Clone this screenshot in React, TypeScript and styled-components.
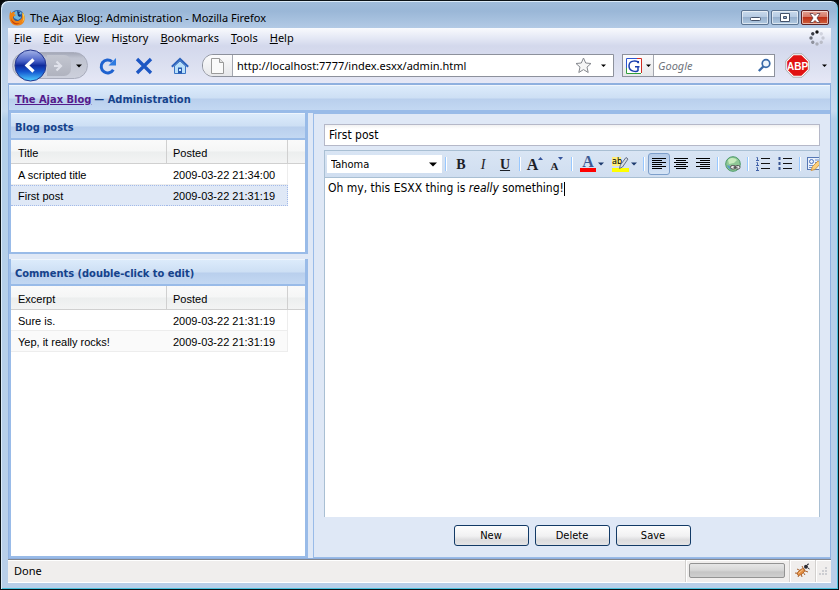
import React from "react";
import styled, { createGlobalStyle, css } from "styled-components";

const ui = '"Noto Sans", "Open Sans", sans-serif';
const tahoma = '"DejaVu Sans Condensed", "DejaVu Sans", sans-serif';
const arial = '"Liberation Sans", Arial, sans-serif';

const Global = createGlobalStyle`
  *, *::before, *::after { box-sizing: border-box; }
  body { margin: 0; background: #05090c; font-family: ${ui}; font-size: 11px; color: #000; }
  button, input, select { font: inherit; color: inherit; margin: 0; padding: 0; border: 0; background: none; outline: none; }
  svg { display: block; flex: none; overflow: visible; }
`;

const Window = styled.div`
  display: flex;
  flex-direction: column;
  min-height: 100vh;
  padding: 0 7px 6px;
  border: 1px solid #0b1216;
  border-radius: 8px 8px 0 0;
  background: linear-gradient(#a1bddb 0, #9ab7d7 10px, #b4cbe6 28px, #c6daef 110px, #b3cfe9 118px, #b9cfe9 100%);
  box-shadow: inset 1px 1px 0 #dcebf8, inset -1px -1px 0 #49c0dc;
`;

const TitleBar = styled.header`
  display: flex;
  align-items: center;
  height: 27px;
  padding: 6px 2px 0 1px;
  gap: 4px;
`;

const WindowTitle = styled.h1`
  flex: 1;
  margin: 0;
  font-size: 11px;
  line-height: 18px;
  font-weight: 400;
  white-space: nowrap;
`;

const WindowButtons = styled.div`
  display: flex;
  gap: 2px;
`;

const WindowButton = styled.button<{ $close?: boolean }>`
  display: flex;
  align-items: center;
  justify-content: center;
  width: 28px;
  height: 15px;
  border: 1px solid ${(p) => (p.$close ? "#5c1f22" : "#5b7391")};
  border-radius: 2px;
  box-shadow: inset 0 0 0 1px rgba(255, 255, 255, 0.55);
  background: ${(p) =>
    p.$close
      ? "linear-gradient(#e3a294 0, #d57563 48%, #bd3119 50%, #d0603c 100%)"
      : "linear-gradient(#c9daec 0, #b5cae2 48%, #97b1ce 50%, #b2cae2 100%)"};
`;

const Client = styled.div`
  display: flex;
  flex-direction: column;
  flex: 1;
`;

const Chrome = styled.div`
  background: linear-gradient(#f9fafd 0, #e4e8f5 10px, #d3d8ec 18px, #dde1f1 40px, #e6e8f6 100%);
`;

const MenuBar = styled.nav`
  display: flex;
  align-items: center;
  height: 20px;
  padding: 0 6px;
  gap: 12px;
`;

const MenuItem = styled.button`
  line-height: 18px;
  white-space: nowrap;
`;

const Spacer = styled.span`
  flex: 1;
`;

const NavBar = styled.div`
  display: flex;
  align-items: center;
  height: 35px;
  padding: 0 2px 0 4px;
`;

const HistoryPill = styled.div`
  display: flex;
  align-items: center;
  width: 76px;
  height: 27px;
  margin-right: 2px;
  padding-left: 1px;
  border: 1px solid #a9adbd;
  border-radius: 14px;
  background: linear-gradient(#a5a9b8 0, #bfc3d0 5px, #cdd0dc 100%);
`;

const BackButton = styled.button`
  flex: none;
  width: 33px;
  height: 33px;
`;

const PillButton = styled.button<{ $raised?: boolean }>`
  display: flex;
  align-items: center;
  justify-content: center;
  flex: 1;
  height: 21px;
  border-radius: 0 7px 7px 0;
  ${(p) =>
    p.$raised &&
    css`
      flex: 0 0 24px;
      background: linear-gradient(#c3c6d0, #b0b3bf);
    `}
`;

const NavButton = styled.button`
  display: flex;
  align-items: center;
  justify-content: center;
  width: 36px;
  height: 28px;
`;

const NavGap = styled.span<{ $width?: number }>`
  flex: none;
  width: ${(p) => p.$width ?? 8}px;
`;

const Field = styled.div<{ $round?: boolean; $basis: string }>`
  display: flex;
  align-items: center;
  flex: ${(p) => p.$basis};
  min-width: 0;
  height: 23px;
  border: 1px solid #8d919c;
  border-radius: ${(p) => (p.$round ? "11px 0 0 11px" : "0")};
  background: #fff;
  overflow: hidden;
`;

const FieldBadge = styled.button<{ $width: number }>`
  display: flex;
  align-items: center;
  justify-content: center;
  gap: 4px;
  flex: none;
  width: ${(p) => p.$width}px;
  height: 21px;
  border-right: 1px solid #a4a7b0;
  background: linear-gradient(#fbfbfc, #e6e7ea);
`;

const FieldInput = styled.input`
  flex: 1;
  min-width: 0;
  height: 21px;
  padding: 0 4px;
  &::placeholder { color: #70757d; font-style: italic; opacity: 1; }
`;

const IconButton = styled.button<{ $width?: number }>`
  display: flex;
  align-items: center;
  justify-content: center;
  width: ${(p) => p.$width ?? 20}px;
  height: 20px;
`;

const Page = styled.main`
  display: flex;
  flex-direction: column;
  flex: 1;
  border: 1px solid #8fb0df;
  border-top-width: 2px;
  background: #dfe8f6;
  font-family: ${tahoma};
  font-size: 11px;
`;

const barFill = css`
  background: linear-gradient(#dcebfb 0, #cddff4 12px, #b9cfed 13px, #c3d8f2 100%);
  color: #15428b;
  font-size: 11px;
  font-weight: 700;
`;

const SiteBar = styled.div`
  ${barFill}
  display: flex;
  align-items: center;
  gap: 3px;
  height: 28px;
  padding: 2px 6px 0;
  border-bottom: 3px solid #99bbe8;
  border-top: 1px solid #f0f6fd;
  white-space: nowrap;
`;

const SiteLink = styled.a`
  color: #551a8b;
`;

const Columns = styled.div`
  display: flex;
  flex: 1;
  gap: 5px;
  background: #dfe8f6;
`;

const Side = styled.aside`
  display: flex;
  flex-direction: column;
  flex: 0 1 299px;
  gap: 5px;
`;

const Panel = styled.section<{ $fill?: boolean }>`
  display: flex;
  flex-direction: column;
  flex: ${(p) => (p.$fill ? "1" : "0 0 141px")};
  border: solid #99bbe8;
  border-width: 0 3px 2px 2px;
`;

const PanelTitle = styled.h2`
  ${barFill}
  height: 27px;
  margin: 0;
  padding: 2px 4px 0;
  border-top: 1px solid #eef5fd;
  border-bottom: 2px solid #99bbe8;
  line-height: 24px;
`;

const PanelBody = styled.div`
  flex: 1;
  background: #fff;
`;

const Table = styled.table`
  width: 100%;
  table-layout: fixed;
  border-collapse: separate;
  border-spacing: 0;
  font-family: ${arial};
  font-size: 11px;
`;

const Col = styled.col<{ $width?: number }>`
  width: ${(p) => (p.$width ? `${p.$width}px` : "auto")};
`;

const Th = styled.th`
  height: 24px;
  padding: 2px 6px 0;
  border-right: 1px solid #d0d0d0;
  border-bottom: 1px solid #d0d0d0;
  background: linear-gradient(#fafafa 0, #f5f6f6 11px, #eceeee 12px, #f3f4f4 100%);
  text-align: left;
  font-weight: 400;
  &:first-child { padding-left: 7px; }
  &:last-child { border-right: 0; }
`;

const Row = styled.tr<{ $state?: "selected" | "alt" }>`
  td {
    height: 21px;
    padding: 1px 6px 0;
    border: solid #ededed;
    border-width: 0 0 1px;
    white-space: nowrap;
  }
  td:first-child { padding-left: 7px; }
  td:nth-child(2) { border-right-width: 1px; }
  td:nth-child(3) { border: 0; }
  ${(p) =>
    p.$state === "alt" &&
    css`
      td:nth-child(-n + 2) { background: #fafafa; }
    `}
  ${(p) =>
    p.$state === "selected" &&
    css`
      td:nth-child(-n + 2) {
        padding-top: 0;
        background: #dfe8f6;
        border-top: 1px dotted #a3bae9;
        border-bottom: 1px dotted #a3bae9;
      }
      td:nth-child(2) { border-right: 1px dotted #a3bae9; }
    `}
`;

const Editor = styled.section`
  display: flex;
  flex-direction: column;
  flex: 1;
  min-width: 0;
  padding: 10px 10px 11px;
  border: solid #99bbe8;
  border-width: 1px 0 1px 1px;
`;

const TitleInput = styled.input`
  height: 22px;
  margin-bottom: 4px;
  padding: 0 4px;
  border: 1px solid #b5b8c8;
  background: linear-gradient(#f1f1f1 0, #fff 4px);
  font-size: 12px;
`;

const RichText = styled.div`
  display: flex;
  flex-direction: column;
  flex: 1;
  min-height: 240px;
  border: 1px solid #a9bfd3;
  border-bottom: 0;
  background: #fff;
`;

const Toolbar = styled.div`
  display: flex;
  align-items: center;
  height: 27px;
  padding: 0 2px;
  overflow: hidden;
  border-bottom: 1px solid #a9bfd3;
  background: linear-gradient(#d9e5f4, #d0def0);
`;

const SelectBox = styled.label`
  display: flex;
  align-items: center;
  flex: none;
  width: 115px;
  height: 18px;
  padding-right: 5px;
  background: #fff;
`;

const FontSelect = styled.select`
  flex: 1;
  height: 18px;
  padding: 0 4px;
  appearance: none;
`;

const Separator = styled.span`
  flex: none;
  width: 2px;
  height: 14px;
  margin: 0 3px;
  border-left: 1px solid #98c8ff;
  border-right: 1px solid #fff;
`;

const Tool = styled.button<{ $active?: boolean; $menu?: boolean }>`
  display: flex;
  align-items: center;
  justify-content: center;
  flex: none;
  gap: ${(p) => (p.$menu ? 2 : 0)}px;
  width: ${(p) => (p.$menu ? 32 : 22)}px;
  height: 22px;
  border-radius: 3px;
  border: 1px solid transparent;
  ${(p) =>
    p.$active &&
    css`
      border-color: #7d9fcb;
      background: linear-gradient(#b5cbe8, #d5e4f6);
    `}
`;

const Glyph = styled.span<{ $size: number; $low?: boolean; $light?: boolean }>`
  padding-top: ${(p) => (p.$low ? 4 : 1)}px;
  color: #1c2027;
  font-family: "Liberation Serif", serif;
  font-size: ${(p) => p.$size}px;
  line-height: 14px;
  font-weight: ${(p) => (p.$light ? 400 : 700)};
`;

const Content = styled.div`
  flex: 1;
  padding: 2px 3px;
  font-size: 12px;
  line-height: 16px;
  outline: none;
`;

const Caret = styled.span`
  display: inline-block;
  width: 1px;
  height: 14px;
  background: #000;
  vertical-align: middle;
`;

const Actions = styled.div`
  display: flex;
  justify-content: center;
  gap: 6px;
  padding-top: 8px;
`;

const ActionButton = styled.button`
  width: 75px;
  height: 21px;
  border: 1px solid #123a66;
  border-radius: 3px;
  background: linear-gradient(#fdfdfd 0, #f1f1f2 10px, #dcdcde 14px, #e3e3e5 100%);
`;

const StatusBar = styled.footer`
  display: flex;
  align-items: stretch;
  height: 24px;
  border-top: 1px solid #83878f;
  border-bottom: 1px solid #fff;
  background: #f0eeed;
  box-shadow: inset 0 1px 0 #fff;
`;

const StatusText = styled.span`
  flex: 1;
  padding: 0 6px;
  line-height: 22px;
`;

const StatusCell = styled.div<{ $width: number }>`
  display: flex;
  align-items: center;
  justify-content: center;
  width: ${(p) => p.$width}px;
  padding: 0 1px 1px 0;
  border-left: 1px solid #d2d0ce;
  box-shadow: inset 1px 0 0 #fff;
`;

const Progress = styled.div`
  width: 96px;
  height: 15px;
  border: 1px solid #939393;
  border-radius: 2px;
  background: linear-gradient(#e6e6e6 0, #d8d8d8 6px, #c5c5c5 8px, #cfcfcf 100%);
`;

const Down = ({ color = "#000", size = 6 }: { color?: string; size?: number }) => (
  <svg width={size} height={size / 2 + 1} viewBox="0 0 8 4" aria-hidden="true">
    <path d="M0 0h8L4 4z" fill={color} />
  </svg>
);

const FirefoxLogo = () => (
  <svg width="17" height="17" viewBox="0 0 17 17" aria-hidden="true">
    <circle cx="8.5" cy="8" r="7" fill="#2a5ca4" />
    <path d="M5 3c3-2 6-1 8 1l-2 2 1 3-3 2-4-2z" fill="#6fb5dd" />
    <path d="M8 2l3 1-1 2 2 1-1 2-2-1z" fill="#1b3771" />
    <path d="M1.500 1.500c0 2 .5 2 1 2.500C4 2.500 5 3 6 3L5 5l2 1-3 2c0 3 3 5 6 3.500 2-1 3-2 3-4l.5-4c4 5 2.500 13-5 13C.5 16.500-1 9 1.500 1.500z" fill="#ee8214" />
    <path d="M13.500 3c3 4 2.500 8-.5 10.500C15 10 14.500 7 13.500 6z" fill="#fbd04a" />
    <path d="M2 9c1 4 5 6 9 5-3 3-9 1-9-5z" fill="#c8420c" />
  </svg>
);

const Minimize = () => (
  <svg width="11" height="9" viewBox="0 0 11 9" aria-hidden="true">
    <rect x="0.500" y="4.500" width="10" height="3" rx="1" fill="#fff" stroke="#44526a" />
  </svg>
);
const Maximize = () => (
  <svg width="10" height="9" viewBox="0 0 10 9" aria-hidden="true">
    <path d="M.5.5h9v8h-9z M3.500 3.500h3v2h-3z" fill="#fff" fillRule="evenodd" stroke="#44526a" />
  </svg>
);
const Close = () => (
  <svg width="12" height="10" viewBox="0 0 12 10" aria-hidden="true">
    <path d="M1 .5h3l2 2 2-2h3L8 5l3 4.500H8l-2-2-2 2H1L4 5z" fill="#fff" stroke="#5a3a44" strokeWidth=".8" />
  </svg>
);

const dotColors = ["#111", "#d0d3de", "#c6c9d4", "#babdc8", "#a9acb7", "#8e919c", "#666a75", "#3a3d46"];
const Throbber = () => (
  <svg width="16" height="16" viewBox="0 0 16 16" aria-hidden="true">
    {dotColors.map((c, i) => (
      <circle key={c} cx="8" cy="2" r="1.700" fill={c} transform={`rotate(${i * 45} 8 8)`} />
    ))}
  </svg>
);

const BackIcon = () => (
  <svg width="33" height="33" viewBox="0 0 33 33" aria-hidden="true">
    <defs>
      <linearGradient id="back" x1="0" y1="0" x2="0" y2="1">
        <stop offset="0" stopColor="#a7b5e8" />
        <stop offset=".35" stopColor="#4a63c8" />
        <stop offset=".5" stopColor="#0f2b9c" />
        <stop offset=".7" stopColor="#1557d0" />
        <stop offset="1" stopColor="#4fd0ff" />
      </linearGradient>
    </defs>
    <circle cx="16.500" cy="16.500" r="15.500" fill="url(#back)" stroke="#23358c" />
    <path d="M19.500 10.500l-6.500 6 6.500 6" fill="none" stroke="#fff" strokeWidth="3.200" />
  </svg>
);
const ForwardIcon = () => (
  <svg width="10" height="12" viewBox="0 0 10 12" aria-hidden="true">
    <path d="M2.500 1.500L7 6l-4.500 4.500M0 6h6" fill="none" stroke="#dfe1ea" strokeWidth="2.200" />
  </svg>
);
const ReloadIcon = () => (
  <svg width="18" height="18" viewBox="0 0 18 18" aria-hidden="true">
    <path d="M14.300 12.800A6.500 6.500 0 1 1 13 4.600" fill="none" stroke="#1e62cf" strokeWidth="3" />
    <path d="M17 1v7.500H9.500z" fill="#2f7be0" />
  </svg>
);
const StopIcon = () => (
  <svg width="18" height="18" viewBox="0 0 18 18" aria-hidden="true">
    <path d="M2 2l14 14M16 2L2 16" stroke="#1d57c4" strokeWidth="3.300" />
  </svg>
);
const HomeIcon = () => (
  <svg width="18" height="18" viewBox="0 0 18 18" aria-hidden="true">
    <path d="M3.500 9L9 4l5.500 5v7.500h-11z" fill="#b9e0fa" stroke="#3b74c4" />
    <path d="M.8 9.800L9 2l8.200 7.800" fill="none" stroke="#2b62bb" strokeWidth="2" />
    <path d="M7 10.500h4v6H7z" fill="#2459b0" />
    <path d="M8 12h2v2H8z" fill="#cfe8fb" />
  </svg>
);
const PageIcon = () => (
  <svg width="13" height="16" viewBox="0 0 13 16" aria-hidden="true">
    <path d="M.5.5h8l4 4v11H.5z" fill="#fafafa" stroke="#9a9a9a" />
    <path d="M8.500.5v4h4" fill="#e2e2e2" stroke="#9a9a9a" />
  </svg>
);
const StarIcon = () => (
  <svg width="17" height="17" viewBox="0 0 17 17" aria-hidden="true">
    <path d="M8.500 1l2.200 5 5.300.5-4 3.600 1.200 5.400-4.700-2.900-4.700 2.900L5 10.100 1 6.500 6.300 6z" fill="#f6f6f6" stroke="#85888e" />
  </svg>
);
const GoogleIcon = () => (
  <svg width="16" height="16" viewBox="0 0 16 16" aria-hidden="true">
    <path d="M0 0h16v16H0z" fill="#fff" />
    <path d="M.5 12V.5H11" fill="none" stroke="#2b55d0" />
    <path d="M11 .5h4.500V15" fill="none" stroke="#cf2c22" />
    <path d="M15 15.500H.5V10" fill="none" stroke="#2f9e3a" />
    <path d="M12.300 5.200V3M12.300 5C11.300 2.200 3 1.800 3 8s8 6 9 4.500V8.700M9 8.700h4.500" fill="none" stroke="#1b3fae" strokeWidth="1.500" />
  </svg>
);
const SearchIcon = () => (
  <svg width="15" height="15" viewBox="0 0 15 15" aria-hidden="true">
    <circle cx="9" cy="5.500" r="3.800" fill="#eef5fb" stroke="#3a6aa8" strokeWidth="1.700" />
    <path d="M6.300 8.500L1.800 13" stroke="#3a6aa8" strokeWidth="2.400" />
  </svg>
);
const AdblockIcon = () => (
  <svg width="25" height="25" viewBox="0 0 25 25" aria-hidden="true">
    <path d="M8 .8h9L24.200 8v9L17 24.200H8L.8 17V8z" fill="#fff" stroke="#9b9b9b" strokeWidth=".8" />
    <path d="M8.600 2.200h7.800l6.400 6.400v7.800l-6.400 6.400H8.600l-6.400-6.400V8.600z" fill="#e01212" />
    <text x="12.500" y="16.500" textAnchor="middle" fontFamily="Liberation Sans Narrow, Liberation Sans, sans-serif" fontSize="10" fontWeight="700" fill="#fff">ABP</text>
  </svg>
);

const Grow = () => (
  <svg width="5" height="14" viewBox="0 0 5 14" aria-hidden="true">
    <path d="M0 3l2.500-3L5 3z" fill="#33539b" />
  </svg>
);
const Shrink = () => (
  <svg width="5" height="14" viewBox="0 0 5 14" aria-hidden="true">
    <path d="M0 0h5L2.500 3z" fill="#33539b" />
  </svg>
);
const TextColorIcon = () => (
  <svg width="16" height="16" viewBox="0 0 16 16" aria-hidden="true">
    <text x="8" y="11" textAnchor="middle" fontFamily="Liberation Serif, serif" fontSize="16" fontWeight="700" fill="#3d5a94">A</text>
    <path d="M0 12h16v4H0z" fill="#f00" />
  </svg>
);
const HighlightIcon = () => (
  <svg width="17" height="16" viewBox="0 0 17 16" aria-hidden="true">
    <path d="M0 12h17v4H0z" fill="#ff0" />
    <path d="M0 1h9v9H0z" fill="#ffee7a" />
    <text x="0" y="8" fontFamily="DejaVu Sans Condensed, sans-serif" fontSize="9" fill="#000">ab</text>
    <path d="M14 1.500l2 1.500-5.500 8-3 1.500.8-3.500z" fill="#d5dbe6" stroke="#56637c" strokeWidth=".9" />
  </svg>
);
const alignOffsets = { left: 0, center: 2, right: 4 };
const AlignIcon = ({ kind }: { kind: "left" | "center" | "right" }) => (
  <svg width="14" height="12" viewBox="0 0 14 12" aria-hidden="true">
    {[0, 2, 4, 6, 8, 10].map((y, i) => (
      <rect key={y} x={i % 2 ? alignOffsets[kind] : 0} y={y} width={i % 2 ? 10 : 14} height="1" fill="#000" />
    ))}
  </svg>
);
const LinkIcon = () => (
  <svg width="16" height="16" viewBox="0 0 16 16" aria-hidden="true">
    <circle cx="8" cy="8" r="7.300" fill="#8fc795" stroke="#4b9a68" />
    <path d="M3 4c3-3 7-2 9 0L9 7 4 8z" fill="#c6ebbd" />
    <path d="M2 9l3 1 1 4c-2-1-4-3-4-5z" fill="#5a9fc4" />
    <rect x="5.500" y="9.500" width="5" height="3.500" rx="1.700" fill="#e8e8e8" stroke="#555" />
    <rect x="10" y="9.500" width="5" height="3.500" rx="1.700" fill="#e8e8e8" stroke="#555" />
    <path d="M8.500 11.200h4" stroke="#333" />
  </svg>
);
const ListIcon = ({ ordered }: { ordered?: boolean }) => (
  <svg width="14" height="14" viewBox="0 0 14 14" aria-hidden="true">
    {[2, 7, 12].map((y) => (
      <g key={y}>
        <path d={`M5 ${y - 0.5}h9`} stroke="#111" />
        {ordered ? (
          <path d={`M0.500 ${y - 1.500}h1v3M0 ${y + 1.500}h3`} fill="none" stroke="#4262a8" />
        ) : (
          <rect x="0.500" y={y - 2} width="2" height="3" fill="#35528f" />
        )}
      </g>
    ))}
  </svg>
);
const SourceIcon = () => (
  <svg width="16" height="16" viewBox="0 0 16 16" aria-hidden="true">
    <rect x="0.500" y="1.500" width="14" height="12" fill="#eaf1fb" stroke="#5577b5" />
    <circle cx="4.500" cy="5.500" r="2" fill="none" stroke="#4a72bd" />
    <path d="M8 4h4M8 6.500h3M2 9.500h4M2 11.500h3" stroke="#7393cb" />
    <path d="M11 5l3 2-6 6.500-4 1 1.500-4z" fill="#fbd07c" stroke="#c98a35" strokeWidth=".8" />
  </svg>
);
const BugIcon = () => (
  <svg width="16" height="16" viewBox="0 0 16 16" aria-hidden="true">
    <path d="M3 6l4 2M8 14l-1-4M1 10l4 .5M4 14l1.500-3M8 3l1.500 3M14 9l-4-1.500M11 12l-2-3" stroke="#a8602c" />
    <ellipse cx="7" cy="9" rx="4.500" ry="2.200" transform="rotate(-38 7 9)" fill="#e08a3c" stroke="#a8602c" strokeWidth=".7" />
    <path d="M4.500 10.500L9 6.500" stroke="#fac894" />
    <circle cx="12" cy="3.800" r="2" fill="#2b2b33" />
    <path d="M13 1.500l2-.5M14 5l1.500 1" stroke="#2b2b33" />
  </svg>
);
const Grip = () => (
  <svg width="10" height="10" viewBox="0 0 10 10" aria-hidden="true">
    <path d="M7 1h2v2H7zM7 4h2v2H7zM7 7h2v2H7zM4 4h2v2H4zM4 7h2v2H4zM1 7h2v2H1z" fill="#cccdd1" />
  </svg>
);

const menus: [string, string, string][] = [
  ["", "F", "ile"],
  ["", "E", "dit"],
  ["", "V", "iew"],
  ["Hi", "s", "tory"],
  ["", "B", "ookmarks"],
  ["", "T", "ools"],
  ["", "H", "elp"],
];

type GridRow = { text: string; posted: string; state?: "selected" | "alt" };

const posts: GridRow[] = [
  { text: "A scripted title", posted: "2009-03-22 21:34:00" },
  { text: "First post", posted: "2009-03-22 21:31:19", state: "selected" },
];
const comments: GridRow[] = [
  { text: "Sure is.", posted: "2009-03-22 21:31:19" },
  { text: "Yep, it really rocks!", posted: "2009-03-22 21:31:19", state: "alt" },
];

const DataGrid = ({ heading, rows }: { heading: string; rows: GridRow[] }) => (
  <Table>
    <colgroup>
      <Col $width={156} />
      <Col $width={121} />
      <Col />
    </colgroup>
    <thead>
      <tr>
        <Th scope="col">{heading}</Th>
        <Th scope="col">Posted</Th>
        <Th aria-hidden="true" />
      </tr>
    </thead>
    <tbody>
      {rows.map((r) => (
        <Row key={r.text} $state={r.state}>
          <td>{r.text}</td>
          <td>{r.posted}</td>
          <td />
        </Row>
      ))}
    </tbody>
  </Table>
);

export default function App() {
  return (
    <>
      <Global />
      <Window>
        <TitleBar>
          <FirefoxLogo />
          <WindowTitle>The Ajax Blog: Administration - Mozilla Firefox</WindowTitle>
          <WindowButtons>
            <WindowButton aria-label="Minimize"><Minimize /></WindowButton>
            <WindowButton aria-label="Maximize"><Maximize /></WindowButton>
            <WindowButton aria-label="Close" $close><Close /></WindowButton>
          </WindowButtons>
        </TitleBar>
        <Client>
          <Chrome>
            <MenuBar>
              {menus.map(([before, key, after]) => (
                <MenuItem key={key + after}>{before}<u>{key}</u>{after}</MenuItem>
              ))}
              <Spacer />
              <Throbber />
            </MenuBar>
            <NavBar>
              <HistoryPill>
                <BackButton aria-label="Back"><BackIcon /></BackButton>
                <PillButton aria-label="Forward" $raised><ForwardIcon /></PillButton>
                <PillButton aria-label="Recent pages"><Down /></PillButton>
              </HistoryPill>
              <NavButton aria-label="Reload"><ReloadIcon /></NavButton>
              <NavButton aria-label="Stop"><StopIcon /></NavButton>
              <NavButton aria-label="Home"><HomeIcon /></NavButton>
              <NavGap $width={4} />
              <Field $round $basis="1 1 400px">
                <FieldBadge $width={30} aria-label="Site information"><PageIcon /></FieldBadge>
                <FieldInput aria-label="Address" defaultValue="http://localhost:7777/index.esxx/admin.html" />
                <IconButton aria-label="Bookmark this page"><StarIcon /></IconButton>
                <IconButton aria-label="Show history"><Down size={5} /></IconButton>
              </Field>
              <NavGap />
              <Field $basis="0 1 153px">
                <FieldBadge $width={31} aria-label="Search engine"><GoogleIcon /><Down size={5} /></FieldBadge>
                <FieldInput aria-label="Search" placeholder="Google" />
                <IconButton aria-label="Search"><SearchIcon /></IconButton>
              </Field>
              <NavGap />
              <IconButton $width={28} aria-label="Adblock Plus"><AdblockIcon /></IconButton>
              <NavGap />
              <IconButton $width={10} aria-label="Adblock menu"><Down size={5} /></IconButton>
            </NavBar>
          </Chrome>
          <Page>
            <SiteBar>
              <SiteLink href="#">The Ajax Blog</SiteLink>
              <span>— Administration</span>
            </SiteBar>
            <Columns>
              <Side>
                <Panel>
                  <PanelTitle>Blog posts</PanelTitle>
                  <PanelBody><DataGrid heading="Title" rows={posts} /></PanelBody>
                </Panel>
                <Panel $fill>
                  <PanelTitle>Comments (double-click to edit)</PanelTitle>
                  <PanelBody><DataGrid heading="Excerpt" rows={comments} /></PanelBody>
                </Panel>
              </Side>
              <Editor>
                <TitleInput aria-label="Post title" defaultValue="First post" />
                <RichText>
                  <Toolbar>
                    <SelectBox>
                      <FontSelect aria-label="Font" defaultValue="Tahoma"><option>Tahoma</option></FontSelect>
                      <Down size={8} />
                    </SelectBox>
                    <Separator />
                    <Tool aria-label="Bold"><Glyph $size={14}>B</Glyph></Tool>
                    <Tool aria-label="Italic"><Glyph $size={14} $light><i>I</i></Glyph></Tool>
                    <Tool aria-label="Underline"><Glyph $size={14}><u>U</u></Glyph></Tool>
                    <Separator />
                    <Tool aria-label="Grow text"><Glyph $size={16}>A</Glyph><Grow /></Tool>
                    <Tool aria-label="Shrink text"><Glyph $size={11} $low>A</Glyph><Shrink /></Tool>
                    <Separator />
                    <Tool $menu aria-label="Text color"><TextColorIcon /><Down color="#1c3a6e" /></Tool>
                    <Tool $menu aria-label="Highlight color"><HighlightIcon /><Down color="#1c3a6e" /></Tool>
                    <Separator />
                    <Tool $active aria-label="Align left"><AlignIcon kind="left" /></Tool>
                    <Tool aria-label="Align center"><AlignIcon kind="center" /></Tool>
                    <Tool aria-label="Align right"><AlignIcon kind="right" /></Tool>
                    <Separator />
                    <Tool aria-label="Insert link"><LinkIcon /></Tool>
                    <Separator />
                    <Tool aria-label="Numbered list"><ListIcon ordered /></Tool>
                    <Tool aria-label="Bulleted list"><ListIcon /></Tool>
                    <Separator />
                    <Tool aria-label="Edit source"><SourceIcon /></Tool>
                  </Toolbar>
                  <Content role="textbox" aria-label="Post body" aria-multiline="true" contentEditable suppressContentEditableWarning spellCheck={false}>
                    Oh my, this ESXX thing is <i>really</i> something!<Caret />
                  </Content>
                </RichText>
                <Actions>
                  <ActionButton>New</ActionButton>
                  <ActionButton>Delete</ActionButton>
                  <ActionButton>Save</ActionButton>
                </Actions>
              </Editor>
            </Columns>
          </Page>
          <StatusBar>
            <StatusText>Done</StatusText>
            <StatusCell $width={104}><Progress role="progressbar" aria-label="Page load" /></StatusCell>
            <StatusCell $width={26}><BugIcon /></StatusCell>
            <StatusCell $width={16}><Grip /></StatusCell>
          </StatusBar>
        </Client>
      </Window>
    </>
  );
}
